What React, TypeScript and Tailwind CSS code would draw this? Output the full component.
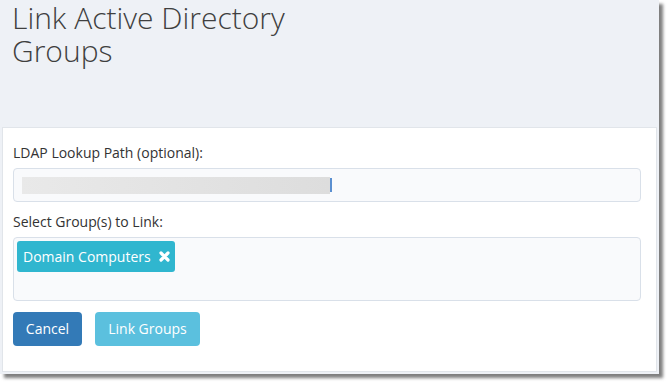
import React from "react";

export default function App() {
  const font = { fontFamily: '"Open Sans", "Noto Sans", Arial, sans-serif' };
  return (
    <div className="w-[670px] h-[385px] bg-white" style={font}>
      <div className="w-[659px] h-[374px] bg-[#eef1f6] flex flex-col shadow-[4px_4px_3px_rgba(0,0,0,0.5)]">
        <div className="h-[127px] shrink-0 pl-[12px] pt-[1px]">
          <h1 className="text-[30px] leading-[33px] font-light text-[#3f3f3f]">
            Link Active Directory
            <br />
            Groups
          </h1>
        </div>
        <div className="flex-1 mx-[2px] mb-[2px] bg-white border border-[#e1e5ea] px-[10px] pt-[15px]">
          <div className="text-[14px] leading-[20px] text-[#333]">LDAP Lookup Path (optional):</div>
          <div className="mt-[5px] w-[628px] h-[34px] rounded-[4px] border border-[#d9e0e9] bg-[#f9fafc] flex items-center pl-[8px]">
            <div className="w-[308px] h-[17px] bg-gradient-to-r from-[#e9e9e9] to-[#dddddd]" />
            <div className="w-[1.5px] h-[14px] bg-[#5b8fd0]" />
          </div>
          <div className="mt-[10px] text-[14px] leading-[20px] text-[#333]">Select Group(s) to Link:</div>
          <div className="mt-[5px] w-[628px] h-[64px] rounded-[4px] border border-[#d9e0e9] bg-[#f9fafc] p-[3px]">
            <div className="inline-flex items-center h-[31px] w-[158px] rounded-[3px] bg-[#30b6cf] pl-[6px] text-white text-[14px] leading-[20px]">
              <span>Domain Computers</span>
              <svg className="ml-[8px]" width="11" height="11" viewBox="0 0 11 11">
                <path d="M2 2 L9 9 M9 2 L2 9" stroke="white" strokeWidth="3.2" strokeLinecap="round" fill="none" />
              </svg>
            </div>
          </div>
          <div className="mt-[11px] flex gap-[13px]">
            <button className="w-[69px] h-[34px] rounded-[4px] bg-[#337ab7] text-white text-[14px] leading-[20px] text-center">
              Cancel
            </button>
            <button className="w-[105px] h-[34px] rounded-[4px] bg-[#5bc0de] text-white text-[14px] leading-[20px] text-center">
              Link Groups
            </button>
          </div>
        </div>
      </div>
    </div>
  );
}
